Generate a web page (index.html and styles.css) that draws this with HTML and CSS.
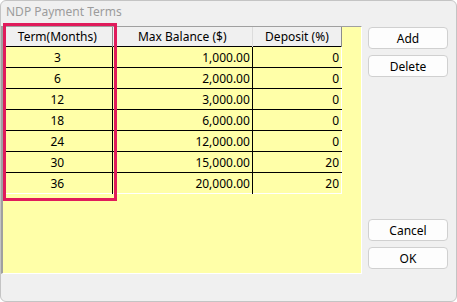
FILE: index.html
```html
<!DOCTYPE html>
<html lang="en">
<head>
    <meta charset="UTF-8">
    <title>NDP Payment Terms</title>
    <link rel="stylesheet" href="styles.css">
</head>
<body>
    <!-- Janela do diálogo -->
    <div class="window">
        <div class="title">NDP Payment Terms</div>

        <div class="content">
            <div class="grid">
                <table class="terms">
                    <colgroup>
                        <col class="col-term">
                        <col class="col-balance">
                        <col class="col-deposit">
                    </colgroup>
                    <thead>
                        <tr>
                            <th class="term">Term(Months)</th>
                            <th>Max Balance ($)</th>
                            <th class="last">Deposit (%)</th>
                        </tr>
                    </thead>
                    <tbody>
                        <tr><td class="term">3</td><td>1,000.00</td><td>0</td></tr>
                        <tr><td class="term">6</td><td>2,000.00</td><td>0</td></tr>
                        <tr><td class="term">12</td><td>3,000.00</td><td>0</td></tr>
                        <tr><td class="term">18</td><td>6,000.00</td><td>0</td></tr>
                        <tr><td class="term">24</td><td>12,000.00</td><td>0</td></tr>
                        <tr><td class="term">30</td><td>15,000.00</td><td>20</td></tr>
                        <tr><td class="term">36</td><td>20,000.00</td><td>20</td></tr>
                    </tbody>
                </table>
                <!-- destaque da coluna -->
                <div class="highlight"></div>
            </div>

            <div class="buttons">
                <button class="btn">Add</button>
                <button class="btn">Delete</button>
                <div class="spacer"></div>
                <button class="btn">Cancel</button>
                <button class="btn">OK</button>
            </div>
        </div>
    </div>
</body>
</html>
```

FILE: styles.css
```css
body {
    margin: 0;
    background: #ffffff;
    font: normal 12px "Noto Sans", "Open Sans", sans-serif;
    color: #000000;
}

.window {
    width: 457px;
    height: 302px;
    box-sizing: border-box;
    background: #f0f0f0;
    border: 1px solid #c4c4c4;
    border-radius: 6px;
    display: flex;
    flex-direction: column;
    overflow: hidden;
}

.title {
    height: 25px;
    padding-left: 5px;
    line-height: 22px;
    color: #9c9c9c;
}

.content {
    display: flex;
    align-items: flex-start;
}

.grid {
    position: relative;
    width: 361px;
    height: 248px;
    box-sizing: border-box;
    background: #ffffa8;
    border-top: 1px solid #a0a0a0;
    border-left: 2px solid #a0a0a0;
    border-right: 1px solid #ffffff;
    border-bottom: 1px solid #ffffff;
}

.terms {
    table-layout: fixed;
    width: 339px;
    border-collapse: collapse;
    border-right: 1px solid #ffffff;
    border-bottom: 1px solid #ffffff;
}

.col-term { width: 109px; }
.col-balance { width: 140px; }
.col-deposit { width: 89px; }

.terms th {
    height: 19px;
    padding: 0;
    font-weight: normal;
    background: #f0f0f0;
    border-right: 1px solid #dcdcdc;
    text-align: center;
}

.terms th.term,
.terms th.last {
    border-right: 1px solid #8c8c8c;
}

.terms td {
    height: 20px;
    padding: 0 2px;
    border-top: 1px solid #000000;
    text-align: right;
    white-space: nowrap;
}

.terms td + td {
    border-left: 1px solid #000000;
}

.terms td.term {
    text-align: center;
    padding: 0;
}

.highlight {
    position: absolute;
    left: 0;
    top: -4px;
    width: 114px;
    height: 178px;
    box-sizing: border-box;
    border: 3px solid #e01b5b;
}

.buttons {
    display: flex;
    flex-direction: column;
    margin-left: 6px;
    margin-top: 1px;
    height: 248px;
}

.btn {
    width: 80px;
    height: 22px;
    margin-bottom: 6px;
    padding: 0;
    background: #fdfdfd;
    border: 1px solid #d0d0d0;
    border-radius: 4px;
    font: inherit;
    color: #000000;
}

.spacer {
    flex: 1;
}
```
